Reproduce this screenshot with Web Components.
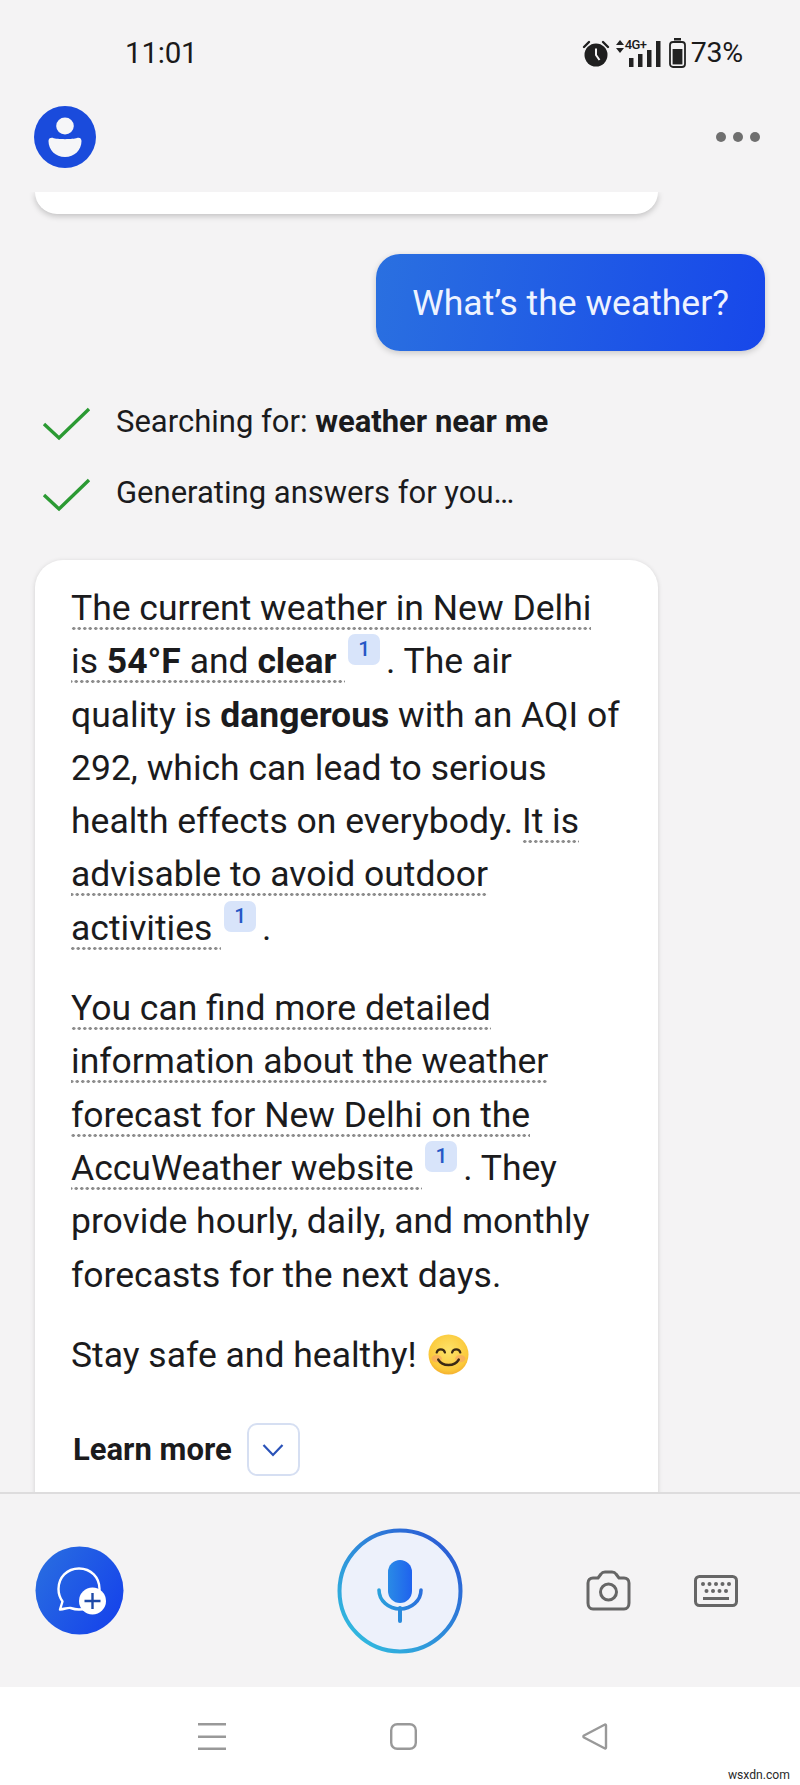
<!DOCTYPE html>
<html>
<head>
<meta charset="utf-8">
<title>Weather chat</title>
<style>
  html, body { margin: 0; padding: 0; }
  body { width: 800px; height: 1785px; overflow: hidden; font-family: Roboto, "Liberation Sans", sans-serif; color: #1b1b1d; background: #f4f3f4; }
  chat-screen { height: 1785px; }
</style>
</head>
<body>
<chat-screen>
  <status-bar time="11:01" battery="73%"></status-bar>
  <app-header></app-header>
  <chat-scroll>
    <clipped-card></clipped-card>
    <user-bubble>What’s the weather?</user-bubble>
    <search-step>Searching for: <b>weather near me</b></search-step>
    <search-step>Generating answers for you…</search-step>
    <answer-card>
      <answer-para>
        <dot-text>The current weather in New Delhi<br>is <b>54°F</b> and <b>clear</b> </dot-text><cite-chip>1</cite-chip> . The air<br>
        quality is <b>dangerous</b> with an AQI of<br>
        292, which can lead to serious<br>
        health effects on everybody. <dot-text>It is<br>advisable to avoid outdoor<br>activities </dot-text><cite-chip>1</cite-chip> .
      </answer-para>
      <answer-para>
        <dot-text>You can find more detailed<br>information about the weather<br>forecast for New Delhi on the<br>AccuWeather website </dot-text><cite-chip>1</cite-chip> . They<br>
        provide hourly, daily, and monthly<br>
        forecasts for the next days.
      </answer-para>
      <answer-para>Stay safe and healthy! <smile-emoji></smile-emoji></answer-para>
      <learn-more>Learn more</learn-more>
    </answer-card>
  </chat-scroll>
  <composer-bar></composer-bar>
  <nav-bar></nav-bar>
</chat-screen>

<script>
function define(name, html) {
  customElements.define(name, class extends HTMLElement {
    connectedCallback() {
      if (this.shadowRoot) return;
      this.attachShadow({ mode: 'open' });
      this.shadowRoot.innerHTML = typeof html === 'function' ? html(this) : html;
    }
  });
}

define('chat-screen', `
  <style>:host { display: flex; flex-direction: column; width: 800px; }</style>
  <slot></slot>`);

define('status-bar', el => `
  <style>
    :host { display: flex; align-items: center; height: 105px; box-sizing: border-box; padding: 0 57px 0 125px; flex: none; color: #1a1a1a; }
    .time { font-size: 29.5px; margin-top: 1px; letter-spacing: -.2px; }
    .icons { margin-left: auto; display: flex; align-items: center; }
    .net { position: relative; width: 50px; height: 30px; margin: 0 4px 0 5px; }
    .net svg { position: absolute; left: 0; top: 0; }
    .net span { position: absolute; left: 10px; top: 0; font-size: 13px; font-weight: 500; line-height: 14px; letter-spacing: -.6px; }
    .pct { font-size: 28.5px; margin-left: 5px; letter-spacing: -.2px; }
  </style>
  <span class="time">${el.getAttribute('time')}</span>
  <div class="icons">
    <svg width="28" height="28" viewBox="0 0 28 28">
      <circle cx="14" cy="16" r="11.5" fill="#1f1f1f"/>
      <path d="M14 9.500V16l3.500 5" stroke="#f4f3f4" stroke-width="2" fill="none"/>
      <path d="M2 8l5-5M26 8l-5-5" stroke="#1f1f1f" stroke-width="2.400" stroke-linecap="round"/>
    </svg>
    <div class="net">
      <svg width="50" height="30" viewBox="0 0 50 30">
        <path d="M1 7l4-5 4 5zM1 10h8l-4 5z" fill="#222"/>
        <rect x="14" y="20" width="4.500" height="9" fill="#222"/>
        <rect x="23" y="16" width="4.500" height="13" fill="#222"/>
        <rect x="32" y="12" width="4.500" height="17" fill="#222"/>
        <rect x="41" y="3" width="4.500" height="26" fill="#222"/>
      </svg>
      <span>4G+</span>
    </div>
    <svg width="17" height="30" viewBox="0 0 17 30">
      <rect x="5" y="0" width="7" height="2.500" fill="#222"/>
      <rect x="1" y="4" width="15" height="25" rx="3" fill="none" stroke="#222" stroke-width="1.800"/>
      <rect x="3.600" y="11" width="9.800" height="15.400" fill="#222"/>
    </svg>
    <span class="pct">${el.getAttribute('battery')}</span>
  </div>`);

define('app-header', `
  <style>
    :host { display: flex; align-items: center; justify-content: space-between; height: 87px; flex: none; box-sizing: border-box; padding: 0 40px 23px 34px; }
    .dots { display: flex; gap: 7px; }
    .dots i { width: 10px; height: 10px; border-radius: 50%; background: #6f6f6f; }
  </style>
  <svg width="62" height="62" viewBox="0 0 62 62">
    <circle cx="31" cy="31" r="31" fill="#1a4bdc"/>
    <ellipse cx="31" cy="20" rx="8.800" ry="8.500" fill="#f6f6f8"/>
    <path d="M19 32c4 1.500 20 1.500 24 0 2.500-.8 4.500.5 4.500 3 0 9-7 16-16.500 16s-16.500-7-16.500-16c0-2.500 2-3.800 5-3z" fill="#f6f6f8"/>
  </svg>
  <div class="dots"><i></i><i></i><i></i></div>`);

define('chat-scroll', `
  <style>
    :host { display: flex; flex-direction: column; flex: 1; min-height: 0; overflow: hidden; padding: 0 35px; border-bottom: 2px solid #dddcdd; }
  </style>
  <slot></slot>`);

define('clipped-card', `
  <style>
    :host { display: block; flex: none; width: 623px; height: 22px; background: #fff; border-radius: 0 0 28px 28px; box-shadow: 0 2px 6px rgba(0,0,0,.22); }
  </style>`);

define('user-bubble', `
  <style>
    :host { display: flex; align-items: center; flex: none; align-self: flex-end; box-sizing: border-box; height: 97px; margin-top: 40px; padding: 0 36px; border-radius: 24px; color: #eef3ff; font-size: 35.5px; background: linear-gradient(100deg, #2a70e0, #1747ea); box-shadow: 0 2px 6px rgba(0,0,0,.18); }
  </style>
  <slot></slot>`);

define('search-step', `
  <style>
    :host { display: flex; align-items: center; gap: 25px; flex: none; height: 71px; padding-left: 7px; font-size: 31px; }
    :host(:first-of-type) { margin-top: 35px; }
    svg { flex: none; margin-top: 4px; }
  </style>
  <svg width="49" height="34" viewBox="0 0 49 34"><path d="M2 17l15 14L47 2" fill="none" stroke="#2b9a33" stroke-width="3.400"/></svg>
  <span><slot></slot></span>`);

define('answer-card', `
  <style>
    :host { display: block; flex: none; box-sizing: border-box; width: 623px; height: 1000px; margin-top: 32px; padding: 22px 36px; background: #fff; border-radius: 28px; box-shadow: 0 1px 5px rgba(0,0,0,.14); font-size: 35.5px; line-height: 53.3px; }
  </style>
  <slot></slot>`);

define('answer-para', `
  <style>:host { display: block; margin-bottom: 27px; white-space: nowrap; }</style>
  <slot></slot>`);

define('dot-text', `
  <style>
    :host { display: inline; padding-bottom: 1px; background: radial-gradient(circle at 2.750px 1.500px, #8d8d8d 1.400px, transparent 1.800px) 0 100% / 5.500px 3px repeat-x; }
  </style>
  <slot></slot>`);

define('cite-chip', `
  <style>
    :host { display: inline-block; box-sizing: border-box; width: 32px; height: 31px; margin: -8px -3px 0 3px; vertical-align: 17px; border-radius: 7px; background: #d8e4fa; color: #2657c6; font-size: 21px; font-weight: 500; line-height: 30px; text-align: center; }
  </style>
  <slot></slot>`);

define('smile-emoji', `
  <style>:host { display: inline-block; width: 41px; height: 41px; vertical-align: -8px; margin: -8px 0 0 2px; }</style>
  <svg width="41" height="41" viewBox="0 0 40 40">
    <defs><radialGradient id="f" cx=".5" cy=".4" r=".65"><stop offset="0" stop-color="#fde36a"/><stop offset=".75" stop-color="#fbc93a"/><stop offset="1" stop-color="#f2a62a"/></radialGradient></defs>
    <circle cx="20" cy="20" r="19.500" fill="url(#f)"/>
    <ellipse cx="8.500" cy="24" rx="5" ry="3.500" fill="#f59a6a" opacity=".55"/>
    <ellipse cx="31.500" cy="24" rx="5" ry="3.500" fill="#f59a6a" opacity=".55"/>
    <path d="M8.500 18c1-4 7-4 8 0M23.500 18c1-4 7-4 8 0" fill="none" stroke="#3b2a14" stroke-width="2.200" stroke-linecap="round"/>
    <path d="M10 25c4 7 16 7 20 0" fill="none" stroke="#3b2a14" stroke-width="2.400" stroke-linecap="round"/>
  </svg>`);

define('learn-more', `
  <style>
    :host { display: flex; align-items: center; gap: 15px; padding: 14px 0 0 2px; font-size: 31px; font-weight: 700; line-height: 53px; }
    .btn { display: flex; align-items: center; justify-content: center; box-sizing: border-box; width: 53px; height: 53px; border: 2px solid #d6dff2; border-radius: 10px; }
  </style>
  <span><slot></slot></span>
  <span class="btn"><svg width="22" height="14" viewBox="0 0 22 14"><path d="M1.500 2L11 12l9.500-10" fill="none" stroke="#2a52b8" stroke-width="2.200"/></svg></span>`);

define('composer-bar', `
  <style>
    :host { display: grid; grid-template-columns: 1fr auto 1fr; align-items: center; flex: none; height: 193px; padding: 0 35px; box-sizing: border-box; }
    .right { display: flex; justify-content: flex-end; align-items: center; gap: 63px; padding-right: 27px; }
    svg { display: block; }
  </style>
  <svg width="89" height="89" viewBox="0 0 89 89">
    <defs><linearGradient id="nc" x1="0" y1="0" x2="1" y2=".6"><stop offset="0" stop-color="#2a70e0"/><stop offset="1" stop-color="#1746ea"/></linearGradient></defs>
    <circle cx="44.500" cy="44.500" r="44" fill="url(#nc)"/>
    <path d="M44 22.500c-12 0-20.500 9-20.500 20.500 0 5 1.500 9 4 12.500l-2.500 8c5-.5 8-2 10.500-1.500 3 1 5.500 1.500 8.500 1.500 12 0 20.500-9 20.500-20.500s-8.500-20.500-20.500-20.500z" fill="none" stroke="#fff" stroke-width="2.400" stroke-linejoin="round"/>
    <circle cx="57.500" cy="55" r="13.500" fill="#fff"/>
    <path d="M57.500 47v16M49.500 55h16" stroke="#1f4aa8" stroke-width="2.400"/>
  </svg>
  <svg width="126" height="126" viewBox="0 0 126 126">
    <defs>
      <linearGradient id="ring" x1="1" y1="0" x2="0" y2="1"><stop offset="0" stop-color="#2a50d4"/><stop offset="1" stop-color="#32c6e0"/></linearGradient>
      <linearGradient id="mic" x1="0" y1="0" x2="1" y2="0"><stop offset="0" stop-color="#2a8be6"/><stop offset="1" stop-color="#1f62ee"/></linearGradient>
      <linearGradient id="arc" x1="0" y1="0" x2="1" y2="0"><stop offset="0" stop-color="#2aa0dc"/><stop offset="1" stop-color="#2a70dc"/></linearGradient>
    </defs>
    <circle cx="63" cy="63" r="60.500" fill="#edf1fb" stroke="url(#ring)" stroke-width="4"/>
    <rect x="51" y="32" width="24" height="43" rx="12" fill="url(#mic)"/>
    <path d="M42 62a21 19 0 0 0 42 0" fill="none" stroke="url(#arc)" stroke-width="3.600" stroke-linecap="round"/>
    <path d="M63 80v13" stroke="#2a8bdc" stroke-width="4" stroke-linecap="round"/>
  </svg>
  <div class="right">
    <svg width="45" height="41" viewBox="0 0 45 41" fill="none" stroke="#666" stroke-width="3">
      <path d="M7 8h5l3-4c1-1.500 2-2 4-2h7c2 0 3 .5 4 2l3 4h5c3 0 5 2 5 5v20c0 3.500-2 6-5 6H7c-3 0-5-2.500-5-6V13c0-3 2-5 5-5z" stroke-linejoin="round"/>
      <circle cx="22.500" cy="22" r="8"/>
    </svg>
    <svg width="44" height="32" viewBox="0 0 44 32">
      <rect x="1.500" y="1.500" width="41" height="29" rx="4" fill="none" stroke="#666" stroke-width="3"/>
      <g fill="#666">
        <circle cx="9" cy="9" r="2"/><circle cx="15.500" cy="9" r="2"/><circle cx="22" cy="9" r="2"/><circle cx="28.500" cy="9" r="2"/><circle cx="35" cy="9" r="2"/>
        <circle cx="12.500" cy="16" r="2"/><circle cx="19" cy="16" r="2"/><circle cx="25.500" cy="16" r="2"/><circle cx="32" cy="16" r="2"/>
        <rect x="9" y="22" width="26" height="3"/>
      </g>
    </svg>
  </div>`);

define('nav-bar', `
  <style>
    :host { display: flex; justify-content: center; align-items: center; gap: 164px; position: relative; flex: none; height: 98px; box-sizing: border-box; padding: 0 0 0 5px; background: #fff; }
    span { position: absolute; right: 10px; bottom: 3px; font-size: 13.500px; color: #2a2a2a; transform: scaleX(.9); transform-origin: right; }
    svg { display: block; }
  </style>
  <svg width="28" height="27" viewBox="0 0 28 27" fill="#999"><rect y="0" width="28" height="2.500"/><rect y="12.500" width="28" height="2.500"/><rect y="24.500" width="28" height="2.500"/></svg>
  <svg width="27" height="27" viewBox="0 0 27 27"><rect x="1.200" y="1.200" width="24.600" height="24.600" rx="6" fill="none" stroke="#999" stroke-width="2.400"/></svg>
  <svg width="27" height="27" viewBox="0 0 27 27"><path d="M25 2.500v22c0 1-.8 1.300-1.500.8L3 14.500c-.8-.5-.8-1.500 0-2L23.500 1.700c.7-.5 1.500-.2 1.500.8z" fill="none" stroke="#999" stroke-width="2.400" stroke-linejoin="round"/></svg>
  <span>wsxdn.com</span>`);
</script>
</body>
</html>
